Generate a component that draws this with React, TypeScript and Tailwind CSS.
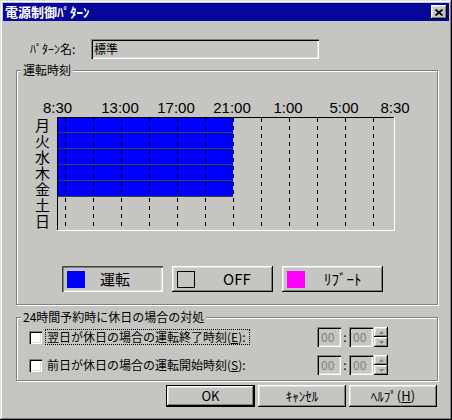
import React from "react";

const raised =
  "shadow-[inset_-1px_-1px_0_#000,inset_1px_1px_0_#fff,inset_-2px_-2px_0_#808080,inset_2px_2px_0_#dfdfdf]";
const pressed =
  "shadow-[inset_1px_1px_0_#404040,inset_2px_2px_0_#808080,inset_-1px_-1px_0_#fff,inset_-2px_-2px_0_#dfdfdf]";
const sunken =
  "shadow-[inset_1px_1px_0_#808080,inset_2px_2px_0_#000,inset_-1px_-1px_0_#fff,inset_-2px_-2px_0_#dfdfdf]";
const etched = "border border-[#808080] shadow-[inset_1px_1px_0_#fff,1px_1px_0_#fff]";

const times = [
  { label: "8:30", x: 57.5 },
  { label: "13:00", x: 120 },
  { label: "17:00", x: 176 },
  { label: "21:00", x: 232 },
  { label: "1:00", x: 288 },
  { label: "5:00", x: 344 },
  { label: "8:30", x: 395 },
];

const days = ["月", "火", "水", "木", "金", "土", "日"];

function Chart() {
  return (
    <svg width={390} height={140} viewBox="25 95 390 140" className="block" shapeRendering="crispEdges">
      {times.map((t, i) => (
        <text
          key={i}
          x={t.x}
          y={113}
          textAnchor="middle"
          fontSize={15}
          fontFamily="'Liberation Sans', sans-serif"
          fill="#000"
        >
          {t.label}
        </text>
      ))}
      {days.map((d, i) => (
        <text
          key={d}
          x={42.5}
          y={130.5 + 16 * i}
          textAnchor="middle"
          fontSize={15}
          fontFamily="'Noto Sans CJK JP', sans-serif"
          fill="#000"
        >
          {d}
        </text>
      ))}
      {/* 月〜金 運転 8:30-21:00 */}
      {[0, 1, 2, 3, 4].map((i) => (
        <g key={i}>
          <rect x={58} y={117 + 16 * i} width={175} height={15} fill="#0000ff" />
          <rect x={58} y={132 + 16 * i} width={175} height={1} fill="#404040" />
        </g>
      ))}
      {Array.from({ length: 12 }, (_, k) => (
        <line
          key={k}
          x1={65.5 + 28 * k}
          x2={65.5 + 28 * k}
          y1={118}
          y2={230}
          stroke="#000"
          strokeWidth={1}
          strokeDasharray="4 4"
        />
      ))}
      <rect x={57} y={117} width={337} height={1} fill="#000" />
      <rect x={57} y={117} width={1} height={113} fill="#000" />
      <rect x={57} y={230} width={338} height={1} fill="#fff" />
      <rect x={394} y={117} width={1} height={114} fill="#fff" />
    </svg>
  );
}

function LegendButton({
  color,
  label,
  gap,
  active,
}: {
  color: string;
  label: string;
  gap: string;
  active?: boolean;
}) {
  return (
    <div className={`w-[101px] h-[26px] flex items-center pl-[5px] ${active ? pressed : raised}`}>
      <div className={`w-[18px] h-[17px] ${color}`} />
      <span className={`${gap} text-[15px] leading-[16px]`}>{label}</span>
    </div>
  );
}

function TimeField() {
  return (
    <div className={`w-[24px] h-[20px] pl-[4px] flex items-center text-[12px] leading-[14px] text-[#808080] ${sunken}`}>
      00
    </div>
  );
}

function Spin() {
  return (
    <div className="ml-[1px] w-[14px] h-[20px] flex flex-col">
      <div className={`h-[10px] flex items-center justify-center ${raised}`}>
        <svg width={5} height={3}>
          <polygon points="0,3 2.5,0 5,3" fill="#808080" />
        </svg>
      </div>
      <div className={`h-[10px] flex items-center justify-center ${raised}`}>
        <svg width={5} height={3}>
          <polygon points="0,0 2.5,3 5,0" fill="#808080" />
        </svg>
      </div>
    </div>
  );
}

function CheckRow({ children, focus, top }: { children: React.ReactNode; focus?: boolean; top: string }) {
  return (
    <div className={`${top} h-[20px] flex items-center`}>
      <div className={`ml-[12px] w-[13px] h-[13px] bg-white ${sunken}`} />
      <span
        className={`ml-[3px] w-[205px] h-[16px] px-[1px] block whitespace-nowrap text-[12px] leading-[14px] border border-dotted ${
          focus ? "border-black" : "border-transparent"
        }`}
      >
        {children}
      </span>
      <div className="ml-[67px] flex items-center">
        <TimeField />
        <span className="w-[8px] text-center text-[12px] leading-[14px]">:</span>
        <TimeField />
        <Spin />
      </div>
    </div>
  );
}

export default function App() {
  return (
    <div className="w-[452px] h-[420px] bg-[#c5c5c1] p-[3px] flex flex-col font-['Noto_Sans_CJK_JP',sans-serif] text-black shadow-[inset_-1px_-1px_0_#000,inset_1px_1px_0_#dfdfdf,inset_-2px_-2px_0_#808080,inset_2px_2px_0_#fff]">
      {/* Title bar */}
      <div className="h-[18px] bg-[#06069a] flex items-center justify-between pl-[2px] pr-[2px]">
        <span className="text-white font-bold text-[13px] leading-[18px]">電源制御ﾊﾟﾀｰﾝ</span>
        <div className={`w-[16px] h-[14px] bg-[#c5c5c1] flex items-center justify-center ${raised}`}>
          <svg width={8} height={7} viewBox="0 0 8 7">
            <path d="M0.5 0.5 L7.5 6.5 M7.5 0.5 L0.5 6.5" stroke="#000" strokeWidth={1.7} />
          </svg>
        </div>
      </div>

      {/* Pattern name */}
      <div className="mt-[18px] h-[20px] flex items-center pl-[27px]">
        <span className="w-[61px] text-[12px] leading-[14px]">ﾊﾟﾀｰﾝ名:</span>
        <div className={`w-[228px] h-[20px] pl-[3px] flex items-center text-[12px] leading-[14px] ${sunken}`}>
          標準
        </div>
      </div>

      {/* 運転時刻 */}
      <div className={`ml-[13px] mt-[11px] w-[422px] h-[235px] flex flex-col ${etched}`}>
        <span className="-mt-[8px] ml-[4px] px-[2px] h-[14px] w-fit bg-[#c5c5c1] text-[12px] leading-[14px]">
          運転時刻
        </span>
        <div className="mt-[18px] ml-[8px]">
          <Chart />
        </div>
        <div className="mt-[31px] ml-[45px] flex gap-[9px]">
          <LegendButton color="bg-[#0000ff]" label="運転" gap="ml-[15px]" active />
          <LegendButton color="border border-black" label="OFF" gap="ml-[28px]" />
          <LegendButton color="bg-[#ff00ff]" label="ﾘﾌﾞｰﾄ" gap="ml-[19px]" />
        </div>
      </div>

      {/* 24時間予約 */}
      <div className={`ml-[13px] mt-[12px] w-[422px] h-[64px] flex flex-col ${etched}`}>
        <span className="-mt-[8px] ml-[4px] px-[2px] h-[14px] w-fit bg-[#c5c5c1] text-[12px] leading-[14px]">
          24時間予約時に休日の場合の対処
        </span>
        <CheckRow top="mt-[3px]" focus>
          翌日が休日の場合の運転終了時刻(<span className="underline">E</span>):
        </CheckRow>
        <CheckRow top="mt-[8px]">
          前日が休日の場合の運転開始時刻(<span className="underline">S</span>):
        </CheckRow>
      </div>

      {/* Buttons */}
      <div className="mt-[4px] flex justify-end pr-[12px] gap-[3px]">
        <div className="w-[89px] h-[22px] border border-black">
          <div className={`w-full h-full flex items-center justify-center text-[13px] leading-[14px] ${raised}`}>
            OK
          </div>
        </div>
        <div className={`w-[88px] h-[22px] flex items-center justify-center text-[13px] leading-[14px] ${raised}`}>
          ｷｬﾝｾﾙ
        </div>
        <div className={`w-[88px] h-[22px] flex items-center justify-center text-[13px] leading-[14px] ${raised}`}>
          <span>
            ﾍﾙﾌﾟ(<span className="underline">H</span>)
          </span>
        </div>
      </div>
    </div>
  );
}
